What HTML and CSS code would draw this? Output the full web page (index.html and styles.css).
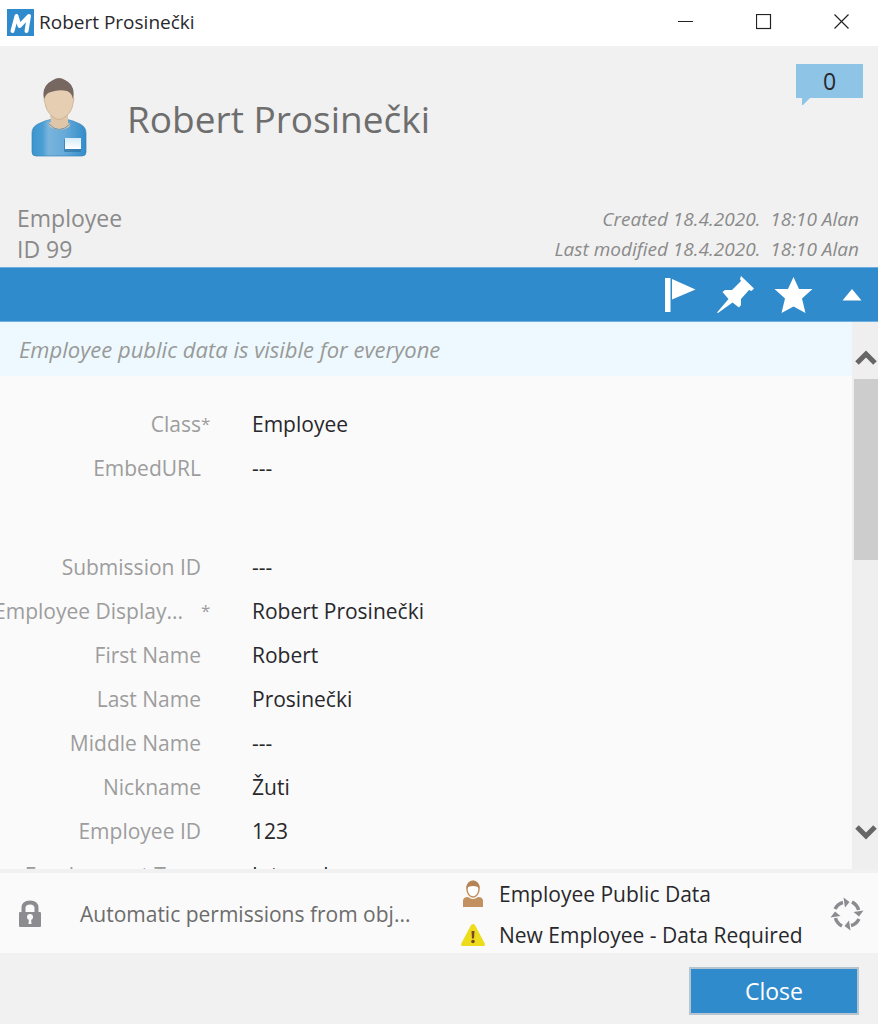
FILE: index.html
```html
<!DOCTYPE html>
<html lang="en">
<head>
<meta charset="utf-8">
<title>Robert Prosinečki</title>
<link rel="stylesheet" href="styles.css">
</head>
<body>
<div class="window">
  <div class="titlebar">
    <svg class="app-logo" viewBox="0 0 27 27" aria-hidden="true">
      <rect width="27" height="27" fill="#308bcd"/>
      <path d="M5.500 22 9.500 7 12.500 17 22 7 19.500 22" fill="none" stroke="#fff" stroke-width="4" stroke-linejoin="round" stroke-linecap="round"/>
    </svg>
    <span class="window-title">Robert Prosinečki</span>
    <div class="window-buttons">
      <button type="button" aria-label="Minimize"><svg width="16" height="16" viewBox="0 0 16 16"><path d="M0 7.500H15" stroke="#222" fill="none"/></svg></button>
      <button type="button" aria-label="Maximize"><svg width="16" height="16" viewBox="0 0 16 16"><rect x="0.500" y="0.500" width="14" height="14" stroke="#222" stroke-width="1.200" fill="none"/></svg></button>
      <button type="button" aria-label="Close window"><svg width="16" height="16" viewBox="0 0 16 16"><path d="M.5.5 14.500 14.500M14.500.5.5 14.500" stroke="#222" stroke-width="1.200" fill="none"/></svg></button>
    </div>
  </div>

  <header class="card-header">
    <div class="identity">
      <svg class="avatar" viewBox="0 0 56 80" aria-hidden="true">
        <defs>
          <linearGradient id="shirt" x1="0" x2="1"><stop offset="0" stop-color="#3d94ce"/><stop offset=".2" stop-color="#4b9fd4"/><stop offset=".3" stop-color="#79b4dd"/><stop offset=".6" stop-color="#67abd9"/><stop offset="1" stop-color="#338cc9"/></linearGradient>
          <linearGradient id="badge" x1="0" x2="0" y1="0" y2="1"><stop offset="0" stop-color="#d4ebfa"/><stop offset="1" stop-color="#fff"/></linearGradient>
        </defs>
        <path d="M1 56Q1 50 7 47L14 44Q28 39 42 44L49 47Q55 50 55 56V75Q55 79 51 79H5Q1 79 1 75Z" fill="url(#shirt)" stroke="#3585bb" stroke-width=".7"/>
        <path d="M19 37H37V46Q41 46 38 50Q29 56 19 50Q16 46 20 45Z" fill="#dfc6a9"/>
        <path d="M18 47Q28 58 39 47" fill="none" stroke="#6e94b0" stroke-width="1"/>
        <path d="M14 20Q15 10 28 10T42 20Q44 21 42 26Q41 35 35 39Q28 46 21 39Q15 34 14 26Q12 22 14 20Z" fill="#e6ceb3" stroke="#c5a98a" stroke-width=".7"/>
        <path d="M13 22Q10 9 22 3Q28-1 34 3Q45 8 42 22Q41 16 36 14Q28 12 20 15Q15 16 13 22Z" fill="#766760"/>
        <rect x="33" y="62" width="17" height="13" rx="1" fill="#286e9f" opacity=".6"/>
        <rect x="34" y="61" width="16" height="11" fill="url(#badge)"/>
      </svg>
      <h1 class="name">Robert Prosinečki</h1>
      <button type="button" class="comments" aria-label="Comments: 0">0<svg class="bubble-tail" width="8" height="7" viewBox="0 0 8 7"><path d="M0 0H8L1 7H0Z" fill="#8ec4e6"/></svg></button>
    </div>
    <div class="meta">
      <div class="object-type">Employee<br>ID 99</div>
      <div class="history">Created 18.4.2020.&nbsp; 18:10 Alan<br>Last modified 18.4.2020.&nbsp; 18:10 Alan</div>
    </div>
  </header>

  <div class="toolbar">
    <button type="button" aria-label="Flag"><svg width="40" height="40" viewBox="0 0 40 40" fill="#fff"><path d="M5 3H10.500V37H5Z"/><path d="M12 4 35.500 14.500 12 24.500Z"/></svg></button>
    <button type="button" aria-label="Pin"><svg width="40" height="40" viewBox="0 0 40 40" fill="#fff"><path d="M25 1 38 13.500 35.500 16 33 15 25 24V30L23 32.500 16.500 27.500 2 38 1 37.500 12.500 24 6.500 17 9 15H16L25 6 24 4Z"/></svg></button>
    <button type="button" aria-label="Favorite"><svg width="40" height="40" viewBox="0 0 40 40" fill="#fff"><path d="M19.500 2 25 14H38.500L28 23.500 31.500 38 19.500 31.500 7.500 38 11 23.500.5 14H14Z"/></svg></button>
    <button type="button" aria-label="Collapse"><svg width="40" height="40" viewBox="0 0 40 40" fill="#fff"><path d="M20 14 29.500 25.500H10.500Z"/></svg></button>
  </div>

  <main class="pane">
    <div class="pane-content">
      <p class="notice">Employee public data is visible for everyone</p>
      <dl class="properties">
        <div class="row"><dt>Class<span class="required">*</span></dt><dd>Employee</dd></div>
        <div class="row section-end"><dt>EmbedURL</dt><dd>---</dd></div>
        <div class="row"><dt>Submission ID</dt><dd>---</dd></div>
        <div class="row"><dt class="shortened">Employee Display...<span class="required">*</span></dt><dd>Robert Prosinečki</dd></div>
        <div class="row"><dt>First Name</dt><dd>Robert</dd></div>
        <div class="row"><dt>Last Name</dt><dd>Prosinečki</dd></div>
        <div class="row"><dt>Middle Name</dt><dd>---</dd></div>
        <div class="row"><dt>Nickname</dt><dd>Žuti</dd></div>
        <div class="row"><dt>Employee ID</dt><dd>123</dd></div>
        <div class="row"><dt>Employment Type</dt><dd>Internal</dd></div>
      </dl>
    </div>
    <div class="scrollbar">
      <button type="button" class="scroll-up" aria-label="Scroll up"><svg width="22" height="16" viewBox="0 0 22 16"><path d="M2 13 11 4 20 13" fill="none" stroke="#666" stroke-width="5"/></svg></button>
      <div class="thumb"></div>
      <button type="button" class="scroll-down" aria-label="Scroll down"><svg width="22" height="16" viewBox="0 0 22 16"><path d="M2 3 11 12 20 3" fill="none" stroke="#666" stroke-width="5"/></svg></button>
    </div>
  </main>

  <section class="status">
    <button type="button" class="permissions">
      <svg width="22" height="28" viewBox="0 0 22 28"><path d="M4.500 13V8Q4.500 2.500 11 2.500T17.500 8V13" fill="none" stroke="#8b8b90" stroke-width="4"/><rect y="12" width="22" height="15" rx="1" fill="#8b8b90"/><circle cx="11" cy="17" r="3" fill="#fafafa"/><path d="M10 18H12L12.500 24H9.500Z" fill="#fafafa"/></svg>
      <span>Automatic permissions from obj...</span>
    </button>
    <div class="workflow">
      <div class="workflow-row">
        <svg width="26" height="28" viewBox="0 0 26 28"><path d="M3 27V21Q3 17 8 17Q13 21 18 17Q23 17 23 21V27Z" fill="#c2915f"/><ellipse cx="13" cy="9" rx="6" ry="8" fill="#fff" stroke="#c2915f" stroke-width="1.500"/><path d="M6.500 9Q6 1 13 1T19.500 9Q18 6 13 6T6.500 9Z" fill="#b68454"/></svg>
        <span>Employee Public Data</span>
      </div>
      <div class="workflow-row">
        <svg width="26" height="26" viewBox="0 0 26 26"><path d="M13 2Q14.500 2 15.500 4L25 22Q25 24 24 24H2Q1 24 1 22L10.500 4Q11.500 2 13 2Z" fill="#ecdc1c"/><path d="M11.500 9H14.500L14 16.500H12Z" fill="#7c4728"/><circle cx="13" cy="19.500" r="1.800" fill="#7c4728"/></svg>
        <span>New Employee - Data Required</span>
      </div>
    </div>
    <button type="button" class="change-state" aria-label="Change state">
      <svg width="34" height="34" viewBox="0 0 34 34">
        <defs><g id="arc"><path d="M5 12Q8 6.500 13 5.500" fill="none" stroke="#8b8b90" stroke-width="3.500"/><path d="M13.500 .5 19.500 5 15 10.500Z" fill="#8b8b90"/></g></defs>
        <use href="#arc"/><use href="#arc" transform="rotate(90 17 17)"/><use href="#arc" transform="rotate(180 17 17)"/><use href="#arc" transform="rotate(270 17 17)"/>
      </svg>
    </button>
  </section>

  <footer class="actions">
    <button type="button" class="close">Close</button>
  </footer>
</div>
</body>
</html>
```
FILE: styles.css
```css
* { box-sizing: border-box; }

body {
  margin: 0;
  font-family: "Open Sans", "Noto Sans", sans-serif;
  font-size: 21px;
  line-height: 30px;
  color: #28282c;
  background: #f1f1f1;
}

button {
  display: flex;
  align-items: center;
  padding: 0;
  border: 0;
  background: none;
  font: inherit;
  color: inherit;
}

svg { display: block; flex: none; }

.window {
  display: flex;
  flex-direction: column;
  height: 100vh;
}

.titlebar {
  display: flex;
  align-items: center;
  height: 46px;
  flex: none;
  padding: 0 28px 2px 7px;
  background: #fff;
}

.app-logo { width: 27px; height: 27px; }

.window-title {
  margin-left: 5px;
  font-size: 19px;
}

.window-buttons {
  display: flex;
  gap: 62px;
  margin-left: auto;
}

.card-header {
  flex: none;
  padding: 18px 15px 2px 17px;
}

.identity {
  display: flex;
  align-items: flex-start;
  height: 139px;
  padding-left: 14px;
}

.avatar {
  width: 56px;
  height: 80px;
  margin-top: 13px;
}

.name {
  margin: 28px 0 0 40px;
  font-size: 37px;
  line-height: 54px;
  font-weight: 400;
  color: #6e6e6e;
}

.comments {
  position: relative;
  justify-content: center;
  width: 67px;
  height: 34px;
  margin-left: auto;
  background: #8ec4e6;
  font-size: 23px;
}

.bubble-tail {
  position: absolute;
  top: 100%;
  left: 6px;
}

.meta {
  display: flex;
  justify-content: space-between;
  color: #8a8a8a;
  line-height: 31px;
}

.object-type { font-size: 23px; }

.history {
  padding: 1px 4px 0 0;
  font-size: 19px;
  line-height: 30px;
  font-style: italic;
  text-align: right;
}

.toolbar {
  display: flex;
  align-items: center;
  justify-content: flex-end;
  gap: 18px;
  flex: none;
  height: 55px;
  padding-right: 6px;
  border: solid #6fafdf;
  border-width: 1px 0;
  background: #308bcd;
}

.toolbar button:first-child svg { margin-right: -2px; }

.pane {
  display: flex;
  flex: 1;
  min-height: 0;
  border-bottom: 4px solid #f1f1f1;
}

.pane-content {
  flex: 1;
  overflow: hidden;
  background: #fafafa;
}

.notice {
  margin: 0;
  padding: 12px 19px;
  background: #edf9fe;
  font-size: 22px;
  font-style: italic;
  color: #999;
}

.properties { margin: 26px 0 0; }

.row {
  display: flex;
  height: 44px;
  align-items: center;
}

.section-end { margin-bottom: 55px; }

dt {
  position: relative;
  display: flex;
  justify-content: flex-end;
  width: 201px;
  color: #9d9d9d;
  white-space: nowrap;
}

.shortened { padding-right: 18px; }

.required {
  position: absolute;
  left: 100%;
  font-size: 17px;
}

dd { margin: 0 0 0 51px; }

.scrollbar {
  display: flex;
  flex-direction: column;
  width: 26px;
  padding-left: 2px;
  background: #efefef;
}

.scroll-up,
.scroll-down {
  flex: none;
  justify-content: center;
  height: 57px;
  padding-top: 14px;
}

.scroll-down {
  height: 74px;
  margin-top: auto;
  padding-top: 0;
}

.thumb {
  height: 33%;
  background: #cdcdcd;
}

.status {
  display: flex;
  align-items: center;
  flex: none;
  height: 80px;
  padding: 2px 14px 0 19px;
  background: #fafafa;
}

.permissions {
  flex: 1;
  gap: 39px;
  color: #6c6c6c;
}

.workflow {
  display: flex;
  flex-direction: column;
  gap: 11px;
  width: 370px;
}

.workflow-row {
  display: flex;
  align-items: center;
  gap: 13px;
}

.actions {
  display: flex;
  justify-content: flex-end;
  flex: none;
  height: 71px;
  padding: 14px 19px 0;
}

.close {
  justify-content: center;
  width: 170px;
  height: 48px;
  border: 2px solid #b5c4cf;
  background: #308bcd;
  color: #fff;
  font-size: 23px;
}
```
